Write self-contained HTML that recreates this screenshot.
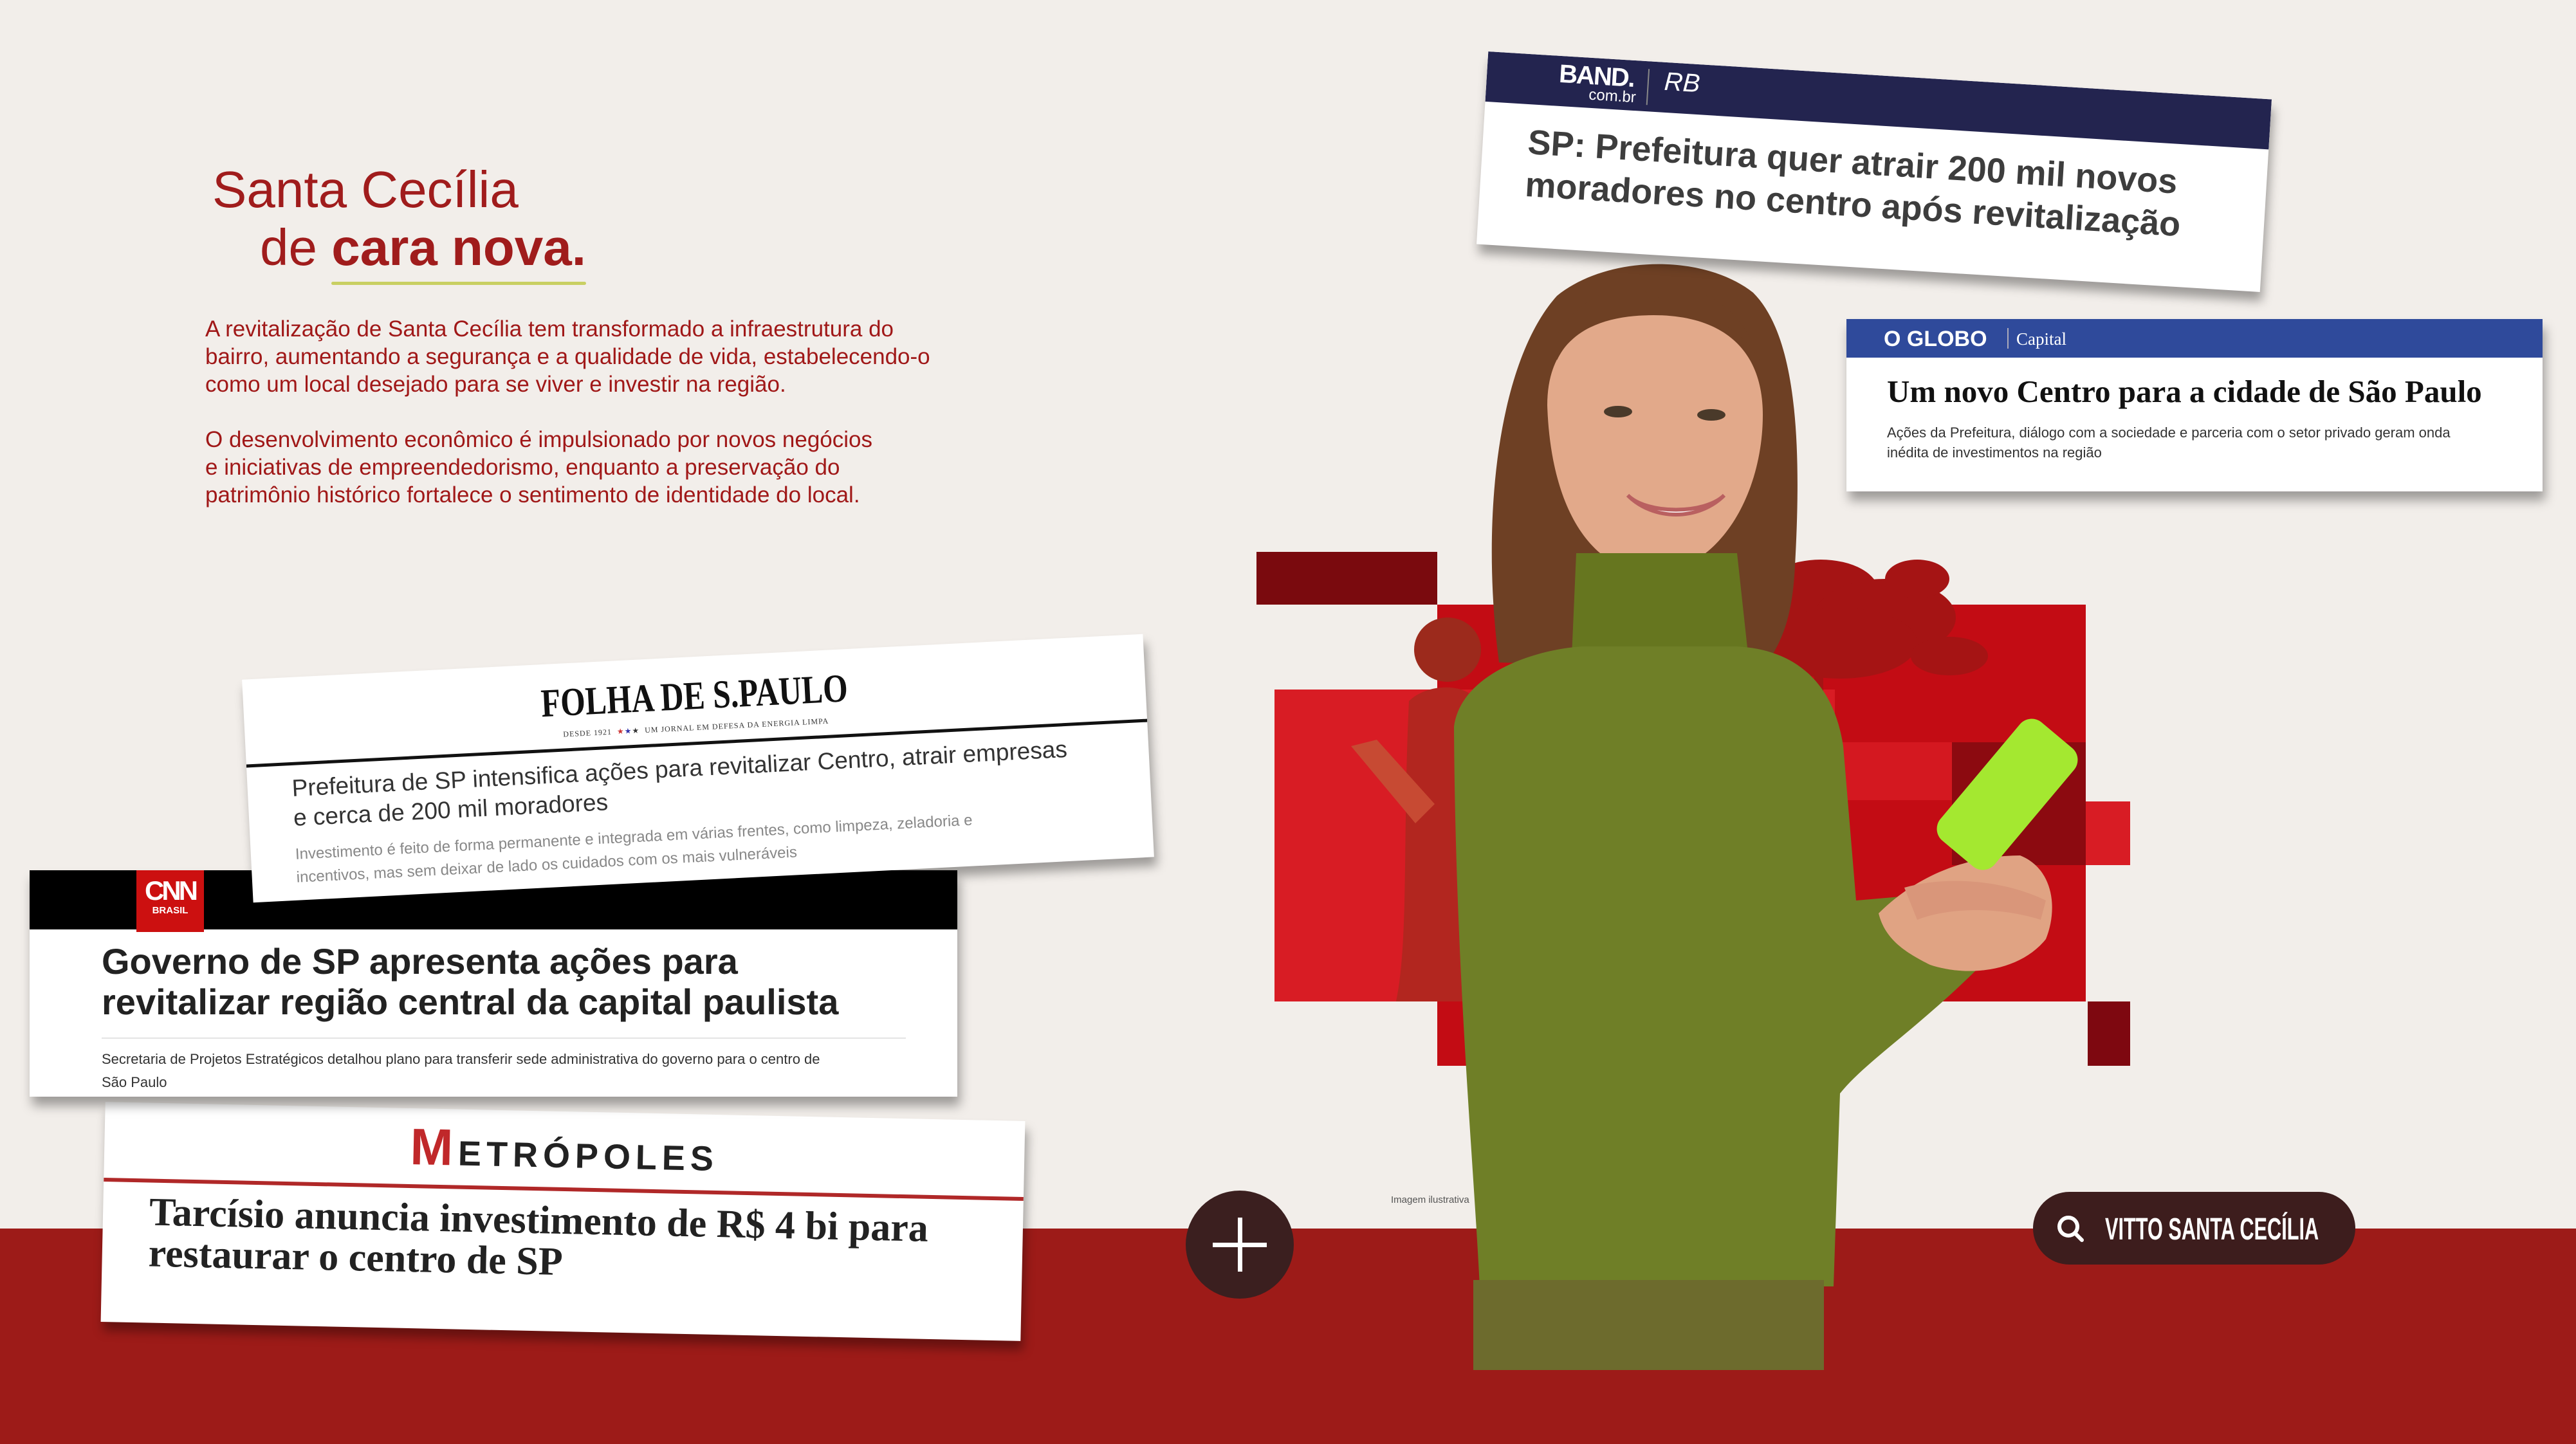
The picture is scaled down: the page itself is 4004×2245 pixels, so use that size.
<!DOCTYPE html>
<html><head><meta charset="utf-8">
<style>
*{margin:0;padding:0;box-sizing:border-box}
html,body{width:4004px;height:2245px;overflow:hidden;background:#f2eeea;font-family:"Liberation Sans",sans-serif}
.abs{position:absolute}
.band{left:0;top:1910px;width:4004px;height:335px;background:#9d1b18}
.title{left:330px;top:250px;color:#a01c1c;font-size:80px;line-height:90px}
.title .l2{margin-left:74px}
.title b{position:relative}
.title b:after{content:"";position:absolute;left:0;right:0;bottom:-14px;height:5px;background:#c9cf63;border-radius:3px}
.para{left:319px;top:490px;width:1300px;color:#a01818;font-size:35px;line-height:43px}
.card{background:#fff;box-shadow:4px 14px 16px rgba(0,0,0,.35);overflow:hidden}
</style></head><body>

<div class="abs band"></div>

<div class="abs title"><div>Santa Cecília</div><div class="l2">de <b>cara nova.</b></div></div>
<div class="abs para">A revitalização de Santa Cecília tem transformado a infraestrutura do<br>bairro, aumentando a segurança e a qualidade de vida, estabelecendo-o<br>como um local desejado para se viver e investir na região.<br><br>O desenvolvimento econômico é impulsionado por novos negócios<br>e iniciativas de empreendedorismo, enquanto a preservação do<br>patrimônio histórico fortalece o sentimento de identidade do local.</div>

<svg class="abs" style="left:0;top:0" width="4004" height="2245" viewBox="0 0 4004 2245">
  <rect x="1953" y="858" width="281" height="82" fill="#7a0a0e"/>
  <rect x="2234" y="940" width="1008" height="617" fill="#c30c14"/>
  <rect x="1981" y="1072" width="871" height="485" fill="#d81c24"/>
  <rect x="2852" y="1154" width="182" height="90" fill="#d41820"/>
  <rect x="3034" y="1154" width="208" height="191" fill="#8c0a10"/>
  <rect x="3242" y="1246" width="69" height="99" fill="#d81c24"/>
  <rect x="2234" y="1557" width="72" height="100" fill="#c30c14"/>
  <rect x="3245" y="1557" width="66" height="100" fill="#7e0810"/>
  <g fill="#a51414">
    <ellipse cx="2830" cy="920" rx="90" ry="50"/><ellipse cx="2930" cy="960" rx="110" ry="60"/>
    <ellipse cx="2860" cy="1000" rx="120" ry="55"/><ellipse cx="2980" cy="900" rx="50" ry="30"/>
    <ellipse cx="3030" cy="1020" rx="60" ry="30"/><rect x="2820" y="1000" width="14" height="100"/>
  </g>
  <g fill="#b2261f">
    <ellipse cx="2250" cy="1010" rx="52" ry="50" fill="#9c2a1c"/>
    <path d="M2190,1090 C2220,1060 2290,1060 2300,1100 L2300,1557 L2170,1557 C2190,1460 2180,1300 2190,1090Z"/>
    <path d="M2100,1160 L2140,1150 L2230,1250 L2200,1280Z" fill="#c74a33"/>
  </g>
  <path d="M2330,1030 C2300,800 2330,560 2420,460 C2500,395 2650,395 2725,455 C2795,525 2800,700 2790,880 C2786,960 2770,1000 2740,1040 Z" fill="#6e4024"/>
  <path d="M2405,630 C2405,530 2470,490 2570,490 C2680,490 2740,545 2740,645 C2740,760 2680,880 2575,892 C2470,892 2410,785 2405,630Z" fill="#e2a98a"/>
  <path d="M2420,520 C2470,440 2560,430 2570,470 C2600,430 2700,450 2735,560 C2700,500 2640,480 2570,490 C2500,490 2450,500 2420,560Z" fill="#6e4024"/>
  <ellipse cx="2515" cy="640" rx="22" ry="9" fill="#4a3a2a"/>
  <ellipse cx="2660" cy="645" rx="22" ry="9" fill="#4a3a2a"/>
  <path d="M2530,770 C2570,810 2640,810 2680,770 C2650,800 2560,800 2530,770Z" fill="#fff" stroke="#b96060" stroke-width="6"/>
  <path d="M2450,860 L2700,860 L2725,1090 L2440,1090 Z" fill="#66761f"/>
  <path d="M2260,1130 C2270,1050 2380,1010 2460,1005 L2700,1005 C2790,1010 2850,1060 2865,1160 L2885,1400 L3000,1390 L3080,1500 C2980,1600 2900,1650 2860,1700 L2850,2000 L2300,2000 C2290,1800 2262,1500 2260,1130Z" fill="#6f7f27"/>
  <path d="M2920,1420 C2980,1360 3060,1330 3140,1330 C3190,1350 3200,1410 3180,1460 C3140,1510 3060,1520 3000,1500 C2960,1480 2930,1460 2920,1420Z" fill="#e0a383"/>
  <rect x="3065" y="1115" width="110" height="240" rx="24" fill="#a4e830" transform="rotate(40 3120 1235)"/>
  <path d="M2960,1380 C3030,1360 3120,1370 3180,1400 L3172,1430 C3110,1410 3030,1410 2980,1430Z" fill="#d9967a"/>
  <rect x="2290" y="1990" width="545" height="140" fill="#6d6b2d"/>
</svg>

<div class="abs" style="left:2162px;top:1857px;font-size:15px;color:#555">Imagem ilustrativa</div>

<div class="abs" style="left:1843px;top:1851px;width:168px;height:168px;border-radius:50%;background:#3b1f1f"></div>
<div class="abs" style="left:1885px;top:1932px;width:84px;height:7px;background:#fff"></div>
<div class="abs" style="left:1924px;top:1893px;width:7px;height:84px;background:#fff"></div>

<div class="abs" style="left:3160px;top:1853px;width:501px;height:113px;border-radius:57px;background:#3d1d1d"></div>
<svg class="abs" style="left:3194px;top:1886px" width="50" height="50" viewBox="0 0 50 50"><circle cx="21" cy="21" r="14" fill="none" stroke="#fff" stroke-width="6"/><line x1="31" y1="31" x2="42" y2="42" stroke="#fff" stroke-width="6" stroke-linecap="round"/></svg>
<div class="abs" style="left:3272px;top:1884px;color:#fff;font-size:48px;font-weight:bold;font-family:'Liberation Sans Narrow','Liberation Sans',sans-serif;transform:scaleX(.64);transform-origin:left;white-space:nowrap">VITTO SANTA CECÍLIA</div>

<div class="abs card" style="left:2303px;top:117px;width:1220px;height:300px;transform:rotate(3.5deg)">
  <div style="height:78px;background:#23244f;position:relative">
    <div class="abs" style="left:112px;top:6px;color:#fff;font-weight:bold;font-size:40px;letter-spacing:-2px">BAND.</div>
    <div class="abs" style="left:160px;top:44px;color:#fff;font-size:24px">com.br</div>
    <div class="abs" style="left:250px;top:12px;width:2px;height:56px;background:#888"></div>
    <div class="abs" style="left:276px;top:8px;color:#fff;font-size:40px;font-style:italic">RB</div>
  </div>
  <div style="padding:26px 0 0 70px;color:#3d3d3d;font-weight:bold;font-size:54px;line-height:66px;white-space:nowrap">SP: Prefeitura quer atrair 200 mil novos<br>moradores no centro após revitalização</div>
</div>

<div class="abs card" style="left:2870px;top:496px;width:1082px;height:268px">
  <div style="height:60px;background:#2f4a9b;position:relative">
    <div class="abs" style="left:58px;top:12px;color:#fff;font-weight:bold;font-size:34px">O GLOBO</div>
    <div class="abs" style="left:250px;top:14px;width:2px;height:32px;background:#aab"></div>
    <div class="abs" style="left:264px;top:16px;color:#fff;font-family:'Liberation Serif',serif;font-size:27px">Capital</div>
  </div>
  <div style="padding:24px 0 0 63px;font-family:'Liberation Serif',serif;font-weight:bold;font-size:49px;color:#111;white-space:nowrap">Um novo Centro para a cidade de São Paulo</div>
  <div style="padding:20px 0 0 63px;font-size:22px;line-height:31px;color:#333">Ações da Prefeitura, diálogo com a sociedade e parceria com o setor privado geram onda<br>inédita de investimentos na região</div>
</div>

<div class="abs card" style="left:160px;top:1728px;width:1430px;height:342px;transform:rotate(1.2deg)">
  <div style="text-align:center;padding-top:14px;font-size:54px;font-weight:bold;color:#222;letter-spacing:8px;white-space:nowrap"><span style="color:#c0282a;font-size:80px">M</span>ETRÓPOLES</div>
  <div class="abs" style="left:0;top:118px;width:100%;height:6px;background:#b02828"></div>
  <div class="abs" style="left:72px;top:138px;font-family:'Liberation Serif',serif;font-weight:bold;font-size:62px;line-height:64px;color:#222;white-space:nowrap">Tarcísio anuncia investimento de R$ 4 bi para<br>restaurar o centro de SP</div>
</div>

<div class="abs card" style="left:46px;top:1353px;width:1442px;height:352px">
  <div style="height:92px;background:#000;position:relative">
    <div class="abs" style="left:166px;top:0;width:105px;height:96px;background:#cc1010;color:#fff;text-align:center">
      <div style="font-size:42px;font-weight:bold;letter-spacing:-4px;padding-top:10px;line-height:44px">CNN</div>
      <div style="font-size:15px;font-weight:bold">BRASIL</div>
    </div>
  </div>
  <div style="padding:18px 0 0 112px;font-weight:bold;font-size:56px;line-height:63px;color:#222;white-space:nowrap">Governo de SP apresenta ações para<br>revitalizar região central da capital paulista</div>
  <div class="abs" style="left:112px;top:260px;width:1250px;height:2px;background:#e4e4e4"></div>
  <div class="abs" style="left:112px;top:276px;font-size:22px;line-height:36px;color:#333">Secretaria de Projetos Estratégicos detalhou plano para transferir sede administrativa do governo para o centro de<br>São Paulo</div>
</div>

<div class="abs card" style="left:384px;top:1021px;width:1402px;height:347px;transform:rotate(-2.9deg)">
  <div style="text-align:center;padding-top:26px;font-family:'Liberation Serif',serif;font-weight:bold;font-size:62px;color:#111;transform:scaleX(.8);white-space:nowrap">FOLHA DE S.PAULO</div>
  <div style="text-align:center;font-family:'Liberation Serif',serif;font-size:12px;color:#333;letter-spacing:1px;margin-top:6px">DESDE 1921 &nbsp;<span style="color:#c33">★</span><span style="color:#33a">★</span>★&nbsp; UM JORNAL EM DEFESA DA ENERGIA LIMPA</div>
  <div class="abs" style="left:0;top:132px;width:100%;height:5px;background:#111"></div>
  <div class="abs" style="left:69px;top:150px;font-size:37px;line-height:46px;color:#333;white-space:nowrap">Prefeitura de SP intensifica ações para revitalizar Centro, atrair empresas<br>e cerca de 200 mil moradores</div>
  <div class="abs" style="left:69px;top:258px;font-size:24px;line-height:36px;color:#888;white-space:nowrap">Investimento é feito de forma permanente e integrada em várias frentes, como limpeza, zeladoria e<br>incentivos, mas sem deixar de lado os cuidados com os mais vulneráveis</div>
</div>

</body></html>
